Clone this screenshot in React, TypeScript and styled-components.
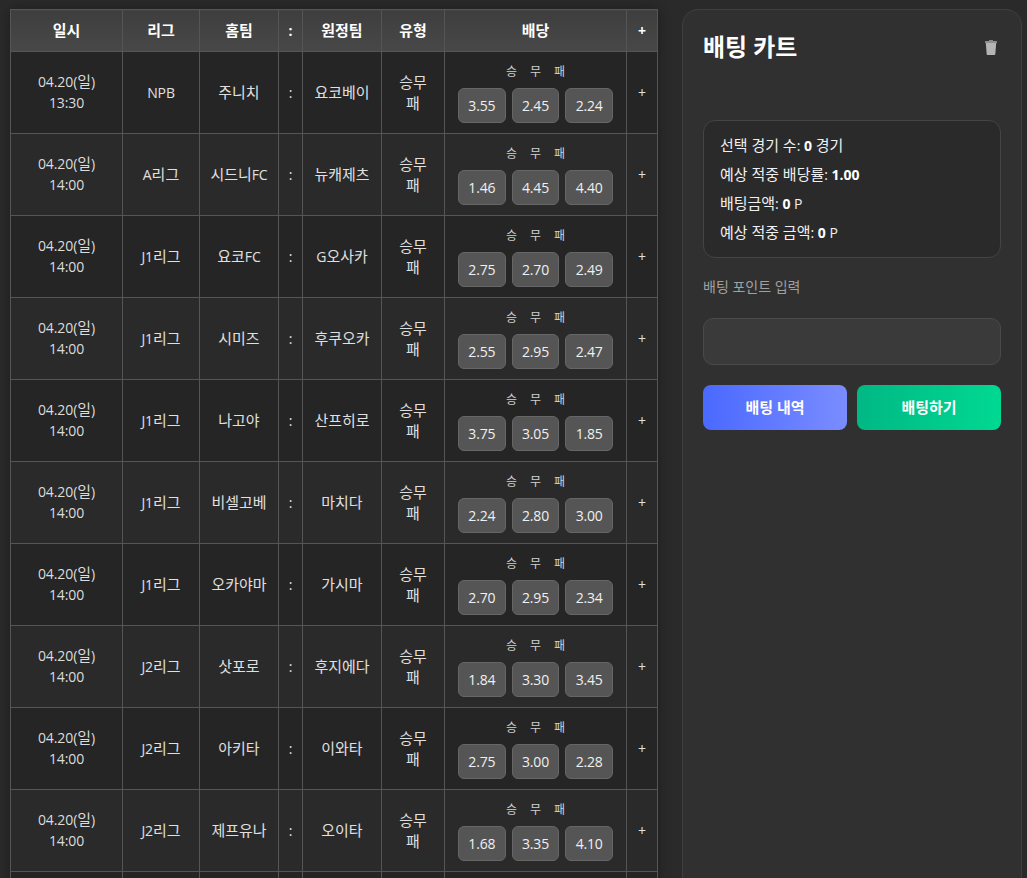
import React from 'react'
import styled, { createGlobalStyle } from 'styled-components'

const FONT = `'Open Sans', 'Noto Sans CJK KR', sans-serif`

const GlobalStyle = createGlobalStyle`
  html, body {
    margin: 0;
    padding: 0;
    height: 878px;
    overflow: hidden;
    background-color: #2a2a2a;
  }
  body {
    font-family: ${FONT};
    color: #e0e0e0;
  }
`

const StyledPage = styled.div`
  display: flex;
  align-items: flex-start;
  gap: 24px;
  padding: 9px 5px 0 10px;
`

const StyledTable = styled.table`
  width: 648px;
  flex: none;
  border-collapse: collapse;
  table-layout: fixed;
  font-size: 14px;
  box-shadow: 0 0 12px rgba(0, 0, 0, 0.3);
`

const StyledHeadCell = styled.th`
  height: 41px;
  padding: 0;
  border: 1px solid #555;
  background: linear-gradient(180deg, #3e3e3e, #484848);
  color: #fff;
  font-size: 14px;
  font-weight: 700;
  line-height: 20px;
  text-align: center;
`

const StyledRow = styled.tr`
  background-color: #252525;

  &:nth-child(even) {
    background-color: #2a2a2a;
  }
`

const StyledCell = styled.td`
  height: 81px;
  padding: 0;
  border: 1px solid #555;
  color: #e0e0e0;
  font-size: 14px;
  line-height: 21px;
  text-align: center;
  letter-spacing: -0.1px;
`

const StyledOddsCell = styled(StyledCell)`
  padding-top: 2px;
  height: 79px;
`

const StyledDate = styled.div`
  position: relative;
  top: -1px;
  line-height: 21px;
  color: #dcdcdc;
`

const StyledHangul = styled.span`
  font-size: 1.07em;
  letter-spacing: 0;
`

const StyledOddsLabels = styled.div`
  display: flex;
  justify-content: center;
  gap: 13px;
  font-size: 12px;
  line-height: 16px;
  color: #d0d0d0;
  margin-bottom: 8px;
`

const StyledOddsButtons = styled.div`
  display: flex;
  justify-content: center;
  gap: 6px;
`

const StyledOddsButton = styled.button`
  width: 47.7px;
  height: 35px;
  padding: 0;
  border: 1px solid #666;
  border-radius: 6px;
  background-color: #555;
  color: #f0f0f0;
  font-family: ${FONT};
  font-size: 14px;
  letter-spacing: -0.2px;
`

const StyledCart = styled.aside`
  width: 340px;
  height: 900px;
  flex: none;
  box-sizing: border-box;
  padding: 20px 20px;
  background-color: #303030;
  border: 1px solid #3f3f3f;
  border-radius: 16px;
`

const StyledCartHeader = styled.div`
  display: flex;
  align-items: center;
  justify-content: space-between;
  height: 34px;
  margin-bottom: 56px;
`

const StyledCartTitle = styled.h2`
  margin: 0;
  font-size: 22.4px;
  line-height: 30px;
  font-weight: 700;
  color: #fff;
`

const StyledTrash = styled.svg`
  width: 12px;
  height: 15px;
  margin-right: 4px;
`

const StyledSummary = styled.div`
  box-sizing: border-box;
  height: 138px;
  padding: 10px 16px;
  background-color: #2a2a2a;
  border: 1px solid #444;
  border-radius: 12px;
`

const StyledSummaryLine = styled.div`
  font-size: 14px;
  line-height: 29px;
  color: #f0f0f0;

  b {
    font-weight: 700;
    color: #fff;
  }
`

const StyledInputLabel = styled.label`
  display: block;
  margin: 20px 0 22px;
  font-size: 14px;
  line-height: 18px;
  color: #a0a0a0;
`

const StyledInput = styled.input`
  display: block;
  box-sizing: border-box;
  width: 100%;
  height: 47px;
  background-color: #3a3a3a;
  border: 1px solid #4a4a4a;
  border-radius: 10px;
`

const StyledActions = styled.div`
  display: flex;
  gap: 10px;
  margin-top: 20px;
`

const StyledAction = styled.button<{ $variant: 'history' | 'submit' }>`
  flex: 1;
  height: 45px;
  padding: 0 0 2px;
  border: 0;
  border-radius: 8px;
  color: #fff;
  font-family: ${FONT};
  font-size: 15px;
  font-weight: 700;
  background: ${({ $variant }) =>
    $variant === 'history'
      ? 'linear-gradient(90deg, #4a69ff, #7a8cff)'
      : 'linear-gradient(90deg, #00b884, #00d992)'};
`

const Ko: React.FC<{ text: string }> = ({ text }) => (
  <>
    {text.split(/([가-힣]+(?: [가-힣]+)*)/).map((part, i) =>
      i % 2 ? <StyledHangul key={i}>{part}</StyledHangul> : part,
    )}
  </>
)

const GAMES = [
  ['13:30', 'NPB', '주니치', '요코베이', '3.55', '2.45', '2.24'],
  ['14:00', 'A리그', '시드니FC', '뉴캐제츠', '1.46', '4.45', '4.40'],
  ['14:00', 'J1리그', '요코FC', 'G오사카', '2.75', '2.70', '2.49'],
  ['14:00', 'J1리그', '시미즈', '후쿠오카', '2.55', '2.95', '2.47'],
  ['14:00', 'J1리그', '나고야', '산프히로', '3.75', '3.05', '1.85'],
  ['14:00', 'J1리그', '비셀고베', '마치다', '2.24', '2.80', '3.00'],
  ['14:00', 'J1리그', '오카야마', '가시마', '2.70', '2.95', '2.34'],
  ['14:00', 'J2리그', '삿포로', '후지에다', '1.84', '3.30', '3.45'],
  ['14:00', 'J2리그', '아키타', '이와타', '2.75', '3.00', '2.28'],
  ['14:00', 'J2리그', '제프유나', '오이타', '1.68', '3.35', '4.10'],
]

const COLUMNS: [string, number][] = [
  ['일시', 112],
  ['리그', 77],
  ['홈팀', 79],
  [':', 24],
  ['원정팀', 79],
  ['유형', 63],
  ['배당', 182],
  ['+', 31],
]

export default function App() {
  return (
    <>
      <GlobalStyle />
      <StyledPage>
        <StyledTable>
          <colgroup>
            {COLUMNS.map(([name, width]) => (
              <col key={name} width={width} />
            ))}
          </colgroup>
          <thead>
            <tr>
              {COLUMNS.map(([name]) => (
                <StyledHeadCell key={name}>
                  <Ko text={name} />
                </StyledHeadCell>
              ))}
            </tr>
          </thead>
          <tbody>
            {GAMES.map(([time, league, home, away, win, draw, lose], i) => (
              <StyledRow key={i}>
                <StyledCell>
                  <StyledDate>
                    <Ko text="04.20(일)" />
                  </StyledDate>
                  <StyledDate>{time}</StyledDate>
                </StyledCell>
                <StyledCell>
                  <Ko text={league} />
                </StyledCell>
                <StyledCell>
                  <Ko text={home} />
                </StyledCell>
                <StyledCell>:</StyledCell>
                <StyledCell>
                  <Ko text={away} />
                </StyledCell>
                <StyledCell>
                  <Ko text="승무" />
                  <br />
                  <Ko text="패" />
                </StyledCell>
                <StyledOddsCell>
                  <StyledOddsLabels>
                    <span>승</span>
                    <span>무</span>
                    <span>패</span>
                  </StyledOddsLabels>
                  <StyledOddsButtons>
                    <StyledOddsButton>{win}</StyledOddsButton>
                    <StyledOddsButton>{draw}</StyledOddsButton>
                    <StyledOddsButton>{lose}</StyledOddsButton>
                  </StyledOddsButtons>
                </StyledOddsCell>
                <StyledCell>+</StyledCell>
              </StyledRow>
            ))}
            <StyledRow>
              {COLUMNS.map(([name]) => (
                <StyledCell key={name} />
              ))}
            </StyledRow>
          </tbody>
        </StyledTable>
        <StyledCart>
          <StyledCartHeader>
            <StyledCartTitle>
              <Ko text="배팅 카트" />
            </StyledCartTitle>
            <StyledTrash viewBox="0 0 12 15">
              <rect x="4" y="0" width="4" height="1" fill="#8a8a8a" />
              <rect x="0" y="1" width="12" height="2" rx="0.5" fill="#8f8f8f" />
              <path d="M.8 3h10.4l-.9 11.2c0 .5-.4.8-.8.8H2.5c-.4 0-.8-.3-.8-.8z" fill="#b4b4b4" />
            </StyledTrash>
          </StyledCartHeader>
          <StyledSummary>
            <StyledSummaryLine>
              <Ko text="선택 경기 수" />: <b>0</b> <Ko text="경기" />
            </StyledSummaryLine>
            <StyledSummaryLine>
              <Ko text="예상 적중 배당률" />: <b>1.00</b>
            </StyledSummaryLine>
            <StyledSummaryLine>
              <Ko text="배팅금액" />: <b>0</b> P
            </StyledSummaryLine>
            <StyledSummaryLine>
              <Ko text="예상 적중 금액" />: <b>0</b> P
            </StyledSummaryLine>
          </StyledSummary>
          <StyledInputLabel>배팅 포인트 입력</StyledInputLabel>
          <StyledInput />
          <StyledActions>
            <StyledAction $variant="history">배팅 내역</StyledAction>
            <StyledAction $variant="submit">배팅하기</StyledAction>
          </StyledActions>
        </StyledCart>
      </StyledPage>
    </>
  )
}
